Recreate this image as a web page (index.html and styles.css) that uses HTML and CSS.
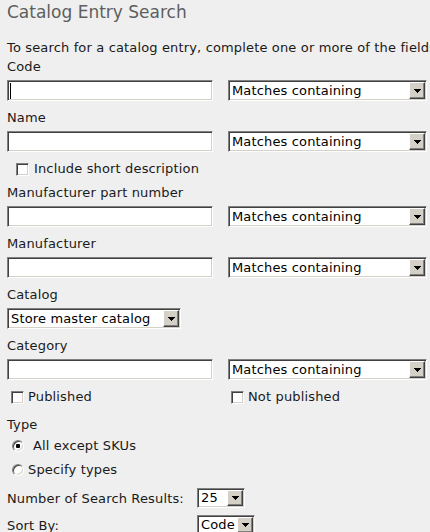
FILE: index.html
```html
<!DOCTYPE html>
<html lang="en">
<head>
    <meta charset="UTF-8">
    <meta name="viewport" content="width=device-width, initial-scale=1.0">
    <title>Catalog Entry Search</title>
    <link rel="stylesheet" href="styles.css">
</head>
<body>

    <div class="page">
        <h1>Catalog Entry Search</h1>
        <p class="intro">To search for a catalog entry, complete one or more of the fields below.</p>

        <div class="field first">
            <label class="label">Code</label>
            <div class="row">
                <input type="text" class="text caret">
                <div class="select wide"><span class="select-value">Matches containing</span><span class="select-btn"><svg width="7" height="4" viewBox="0 0 7 4"><path d="M0 0h7L3.5 4z" fill="#000"/></svg></span></div>
            </div>
        </div>

        <div class="field">
            <label class="label">Name</label>
            <div class="row">
                <input type="text" class="text">
                <div class="select wide"><span class="select-value">Matches containing</span><span class="select-btn"><svg width="7" height="4" viewBox="0 0 7 4"><path d="M0 0h7L3.5 4z" fill="#000"/></svg></span></div>
            </div>
        </div>

        <div class="check-row indent">
            <label class="check"><input type="checkbox"> Include short description</label>
        </div>

        <div class="field tight">
            <label class="label">Manufacturer part number</label>
            <div class="row">
                <input type="text" class="text">
                <div class="select wide"><span class="select-value">Matches containing</span><span class="select-btn"><svg width="7" height="4" viewBox="0 0 7 4"><path d="M0 0h7L3.5 4z" fill="#000"/></svg></span></div>
            </div>
        </div>

        <div class="field">
            <label class="label">Manufacturer</label>
            <div class="row">
                <input type="text" class="text">
                <div class="select wide"><span class="select-value">Matches containing</span><span class="select-btn"><svg width="7" height="4" viewBox="0 0 7 4"><path d="M0 0h7L3.5 4z" fill="#000"/></svg></span></div>
            </div>
        </div>

        <div class="field">
            <label class="label">Catalog</label>
            <div class="row">
                <div class="select catalog"><span class="select-value">Store master catalog</span><span class="select-btn"><svg width="7" height="4" viewBox="0 0 7 4"><path d="M0 0h7L3.5 4z" fill="#000"/></svg></span></div>
            </div>
        </div>

        <div class="field">
            <label class="label">Category</label>
            <div class="row">
                <input type="text" class="text">
                <div class="select wide"><span class="select-value">Matches containing</span><span class="select-btn"><svg width="7" height="4" viewBox="0 0 7 4"><path d="M0 0h7L3.5 4z" fill="#000"/></svg></span></div>
            </div>
        </div>

        <div class="check-row pair">
            <label class="check"><input type="checkbox"> Published</label>
            <label class="check"><input type="checkbox"> Not published</label>
        </div>

        <div class="type-label">Type</div>
        <div class="radio-row first-radio">
            <label class="radio wide-gap"><input type="radio" name="type" checked> All except SKUs</label>
        </div>
        <div class="radio-row">
            <label class="radio"><input type="radio" name="type"> Specify types</label>
        </div>

        <div class="option-row">
            <span class="option-label">Number of Search Results:</span>
            <div class="select small results"><span class="select-value">25</span><span class="select-btn"><svg width="7" height="4" viewBox="0 0 7 4"><path d="M0 0h7L3.5 4z" fill="#000"/></svg></span></div>
        </div>
        <div class="option-row sort">
            <span class="option-label">Sort By:</span>
            <div class="select small sortby"><span class="select-value">Code</span><span class="select-btn"><svg width="7" height="4" viewBox="0 0 7 4"><path d="M0 0h7L3.5 4z" fill="#000"/></svg></span></div>
        </div>
    </div>

</body>
</html>
```

FILE: styles.css
```css
body {
    margin: 0;
    padding: 0;
    background-color: #efefef;
    font-family: "DejaVu Sans", Verdana, sans-serif;
    font-size: 13px;
    letter-spacing: 0.15px;
    color: #1a1a1a;
    overflow: hidden;
}

.page {
    padding-left: 7px;
}

h1 {
    margin: 0;
    font-size: 17px;
    font-weight: normal;
    letter-spacing: 0;
    line-height: 24px;
    color: #5e5e5e;
}

.intro {
    margin: 16px 0 0 0;
    line-height: 16px;
    white-space: nowrap;
}

.field {
    margin-top: 9px;
}

.field.first {
    margin-top: 3px;
}

.field.tight {
    margin-top: 8px;
}

.label {
    display: block;
    line-height: 16px;
    margin-bottom: 5px;
}

.row {
    display: flex;
    gap: 15px;
    height: 21px;
}

/* classic sunken field */
.text,
.select {
    box-sizing: border-box;
    height: 21px;
    margin: 0;
    background: #fff;
    border: 1px solid;
    border-color: #808080 #fff #fff #808080;
    box-shadow: inset 1px 1px 0 #404040, inset -1px -1px 0 #d4d0c8;
}

.text {
    width: 206px;
    padding: 0;
    outline: none;
}

.caret {
    background: linear-gradient(#000, #000) 2px 2px / 1px 16px no-repeat, #fff;
}

.select {
    display: flex;
    align-items: stretch;
    padding: 1px;
}

.select.wide {
    width: 199px;
}

.select.catalog {
    width: 174px;
}

.select.small {
    height: 20px;
}

.select.results {
    width: 48px;
}

.select.sortby {
    width: 58px;
}

.select-value {
    flex: 1;
    padding-left: 2px;
    line-height: 17px;
    white-space: nowrap;
    overflow: hidden;
    color: #000;
}

.select.small .select-value {
    line-height: 16px;
}

.select-btn {
    width: 16px;
    flex: none;
    display: flex;
    align-items: center;
    justify-content: center;
    box-sizing: border-box;
    background: #d4d0c8;
    border: 1px solid;
    border-color: #fff #404040 #404040 #fff;
    box-shadow: inset -1px -1px 0 #808080;
}

.select-btn svg {
    shape-rendering: crispEdges;
}

.check-row {
    margin-top: 9px;
    height: 16px;
    line-height: 16px;
}

.check-row.indent {
    padding-left: 9px;
}

.check-row.pair {
    display: grid;
    grid-template-columns: 220px auto;
    padding-left: 4px;
}

.check,
.radio {
    display: flex;
    align-items: center;
    gap: 4px;
    white-space: nowrap;
}

.check-row.indent .check {
    gap: 5px;
}

input[type="checkbox"],
input[type="radio"] {
    appearance: none;
    -webkit-appearance: none;
    margin: 0;
    width: 13px;
    height: 13px;
    box-sizing: border-box;
    background: #fff;
    border: 1px solid;
    border-color: #808080 #fff #fff #808080;
    box-shadow: inset 1px 1px 0 #404040, inset -1px -1px 0 #d4d0c8;
}

input[type="radio"] {
    width: 12px;
    height: 12px;
    border-radius: 50%;
}

input[type="radio"]:checked {
    background: radial-gradient(circle, #000 0, #000 2px, #fff 2.5px);
}

.type-label {
    margin-top: 12px;
    line-height: 16px;
}

.radio-row {
    margin-top: 8px;
    line-height: 16px;
    padding-left: 5px;
}

.radio-row.first-radio {
    margin-top: 5px;
}

.radio.wide-gap {
    gap: 9px;
}

.option-row {
    display: flex;
    align-items: center;
    margin-top: 10px;
}

.option-row.sort {
    margin-top: 7px;
}

.option-label {
    width: 190px;
}
```
